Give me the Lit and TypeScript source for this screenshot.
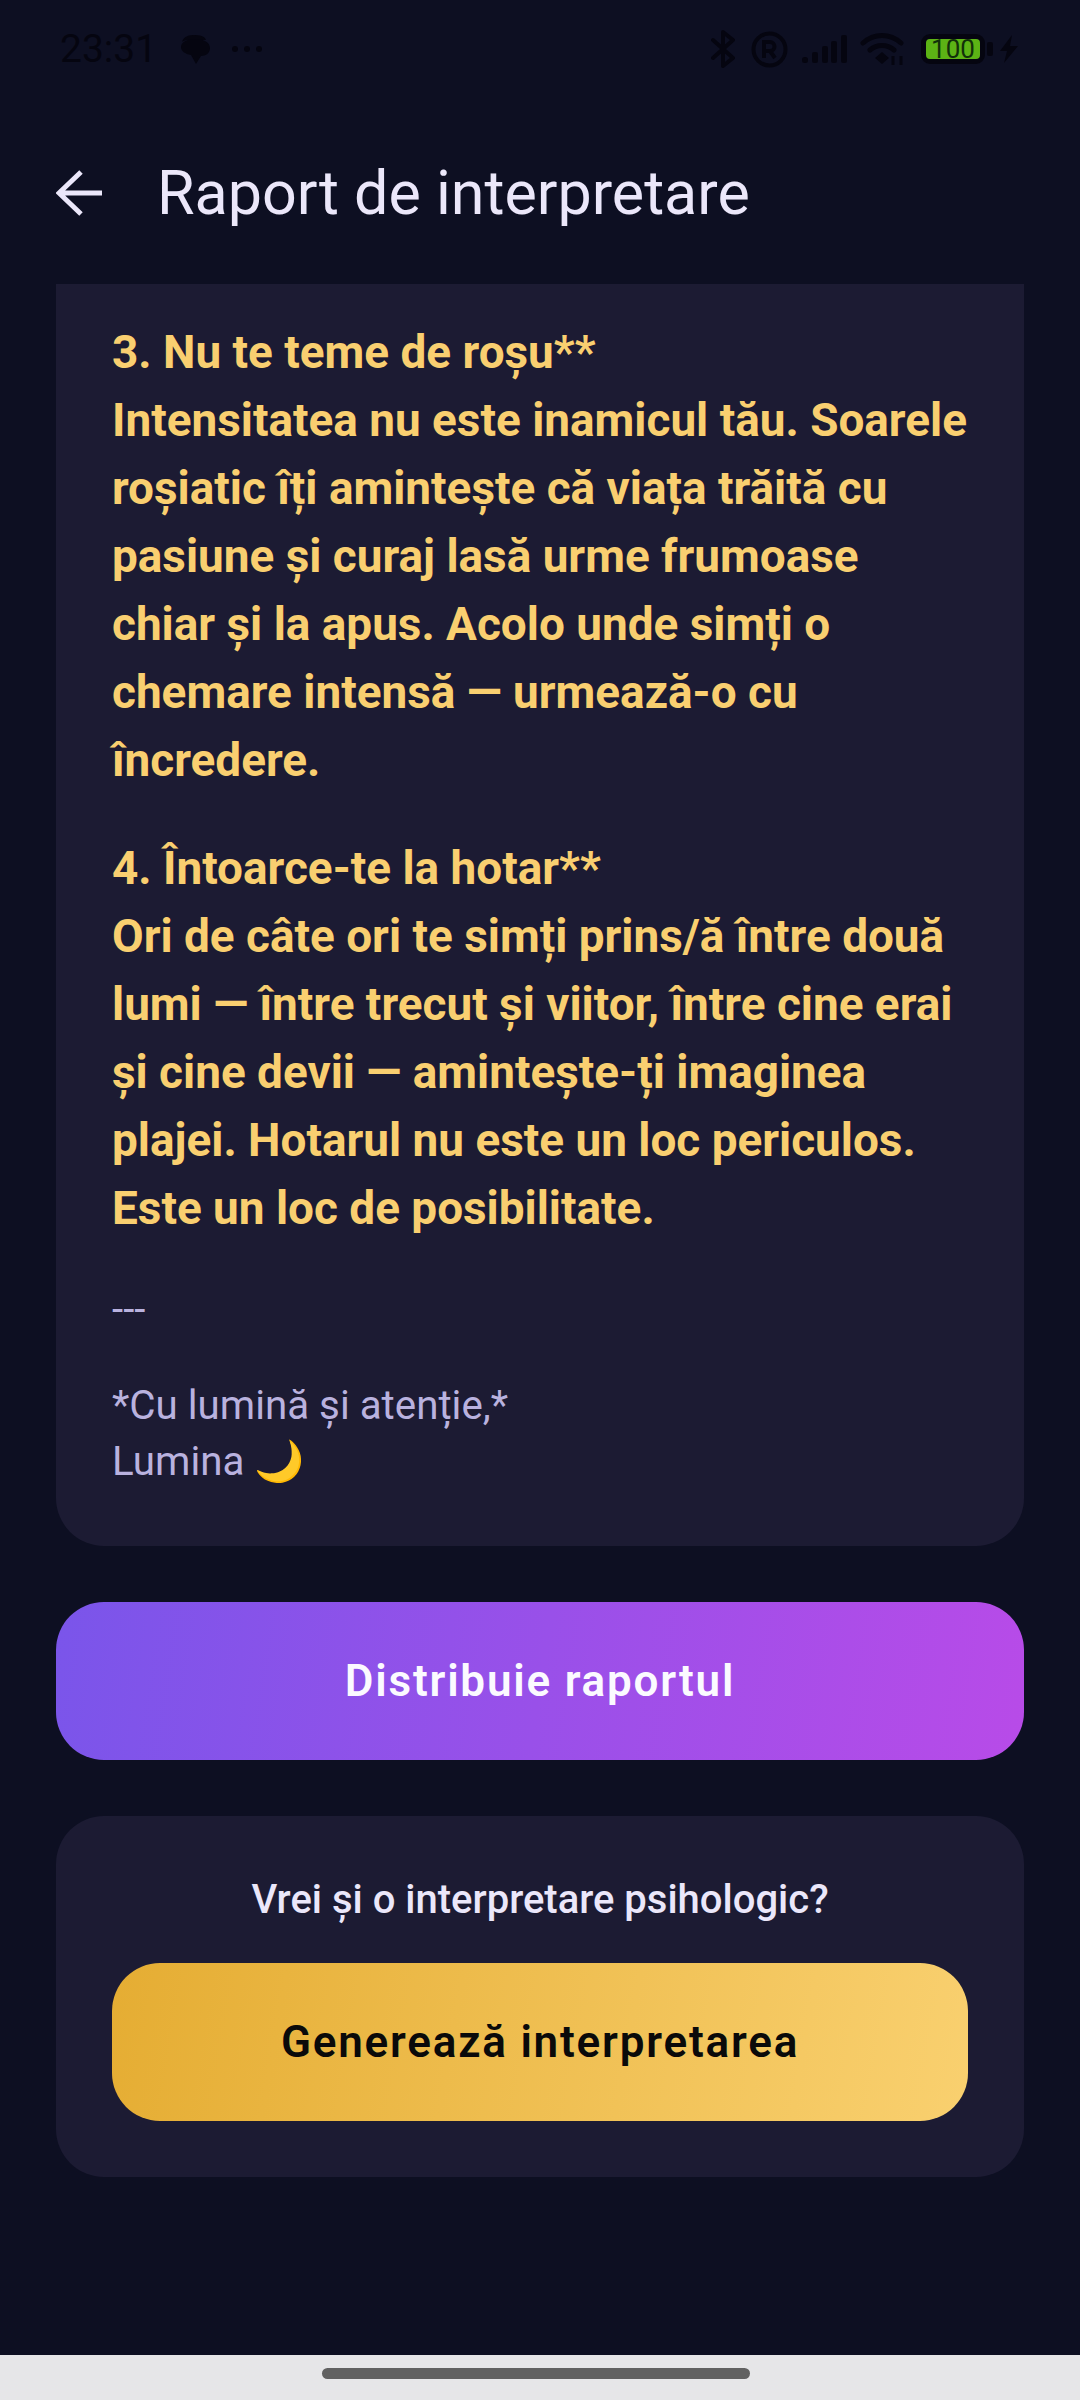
import { LitElement, html, css } from "lit";
import { customElement } from "lit/decorators.js";

@customElement("app-root")
export class AppRoot extends LitElement {
  static styles = css`
    :host {
      display: block;
      width: 1080px;
      height: 2400px;
      background: #0d0f22;
      font-family: Roboto, sans-serif;
      overflow: hidden;
    }
    .page {
      height: 2400px;
      display: flex;
      flex-direction: column;
    }
    .status {
      height: 94px;
      padding: 4px 62px 0 60px;
      display: flex;
      align-items: center;
      justify-content: space-between;
      color: #050510;
      box-sizing: border-box;
    }
    .status-left,
    .status-right {
      display: flex;
      align-items: center;
    }
    .time {
      font-size: 39px;
      width: 121px;
    }
    .status svg {
      display: block;
      flex: none;
    }
    .dots {
      margin-left: 21px;
    }
    .reg {
      margin-left: 16px;
    }
    .signal {
      margin-left: 14px;
    }
    .wifi {
      margin-left: 13px;
    }
    .nub {
      margin-left: 2px;
    }
    .bolt {
      margin-left: 7px;
    }
    .battery {
      width: 64px;
      height: 30px;
      box-sizing: border-box;
      border: 5px solid #050510;
      border-radius: 9px;
      background: #5cb315;
      color: #12300a;
      font-size: 26px;
      line-height: 20px;
      text-align: center;
      margin-left: 15px;
      overflow: hidden;
    }
    .toolbar {
      height: 190px;
      box-sizing: border-box;
      padding: 8px 56px 0;
      display: flex;
      align-items: center;
      gap: 55px;
      color: #ebe7fa;
      font-size: 61px;
    }
    .toolbar svg {
      display: block;
      flex: none;
    }
    .content {
      flex: 1;
      padding: 0 56px;
      display: flex;
      flex-direction: column;
      gap: 56px;
    }
    .card {
      background: #1c1b33;
      border-radius: 48px;
      padding: 0 56px;
    }
    .report {
      border-radius: 0 0 48px 48px;
      height: 1262px;
      box-sizing: border-box;
      padding: 34px 54px 0 56px;
    }
    .gold-text {
      color: #f9cf70;
      font-size: 45.9px;
      font-weight: 700;
      line-height: 68px;
      margin: 0 0 40px;
    }
    .muted {
      color: #b9b2df;
      font-size: 40.3px;
      line-height: 56px;
      margin: 0 0 40px;
    }
    .btn {
      height: 158px;
      border-radius: 48px;
      display: flex;
      align-items: center;
      justify-content: center;
      font-size: 44px;
      font-weight: 600;
      letter-spacing: 1.8px;
    }
    .share {
      background: linear-gradient(99deg, #7a55ea, #b84be8);
      color: #fbfaff;
    }
    .cta {
      height: 361px;
      box-sizing: border-box;
      padding-top: 56px;
    }
    .cta-title {
      color: #ebe7fa;
      font-size: 40px;
      font-weight: 500;
      line-height: 56px;
      text-align: center;
      margin-bottom: 35px;
    }
    .gold {
      background: linear-gradient(100deg, #e5ad33, #f9d06f);
      color: #0a0a0a;
    }
    .nav {
      height: 45px;
      background: #e6e6e8;
      display: flex;
      justify-content: center;
      padding: 13px 8px 0 0;
      box-sizing: border-box;
    }
    .pill {
      width: 428px;
      height: 11px;
      border-radius: 6px;
      background: #616161;
    }
  `;

  render() {
    return html`
      <div class="page">
        <div class="status">
          <div class="status-left">
            <span class="time">23:31</span>
            <svg width="29" height="29" viewBox="0 0 29 29" fill="#050510">
              <path d="M12 0c7 0 12 1 13 5H7C4 5 2 6 1 7c1-4 5-7 11-7z" />
              <path
                d="M14 4c8 0 15 3 15 9 0 5-4 8-9 8l-5 8-5-9C4 19 0 16 0 12c0-5 6-8 14-8z"
              />
            </svg>
            <svg class="dots" width="32" height="8" viewBox="0 0 32 8" fill="#050510">
              <circle cx="4" cy="4" r="3" />
              <circle cx="16" cy="4" r="3" />
              <circle cx="28" cy="4" r="3" />
            </svg>
          </div>
          <div class="status-right">
            <svg width="24" height="38" viewBox="0 0 24 38" fill="none" stroke="#050510" stroke-width="4" stroke-linejoin="round" stroke-linecap="round">
              <path d="M2 10l20 18-10 8V2l10 8L2 28" />
            </svg>
            <svg class="reg" width="37" height="37" viewBox="0 0 37 37" fill="none" stroke="#050510" stroke-width="4">
              <circle cx="18.5" cy="18.5" r="16" />
              <path d="M13 27V11h6a4.500 4.500 0 010 9h-6M19 20l5 7" />
            </svg>
            <svg class="signal" width="45" height="28" viewBox="0 0 45 28" fill="#050510">
              <rect x="0" y="22" width="6" height="6" rx="2.500" />
              <rect x="10" y="17" width="6" height="11" rx="2" />
              <rect x="20" y="11" width="6" height="17" rx="2" />
              <rect x="29" y="6" width="6" height="22" rx="2" />
              <rect x="39" y="0" width="6" height="28" rx="2" />
            </svg>
            <svg class="wifi" width="46" height="34" viewBox="0 0 46 34" fill="none" stroke="#050510" stroke-width="5" stroke-linecap="round">
              <path d="M3 11c11-10 27-10 38 0M10 18c7-6 17-6 24 0" />
              <path d="M15 26l7-6 7 6-7 6z" fill="#050510" stroke="none" />
              <path d="M33 24v9M41 24v9" stroke-width="3" stroke-linecap="butt" />
            </svg>
            <div class="battery">100</div>
            <svg class="nub" width="6" height="14" viewBox="0 0 6 14" fill="#050510">
              <rect width="6" height="14" rx="2" />
            </svg>
            <svg class="bolt" width="18" height="28" viewBox="0 0 18 28" fill="#050510">
              <path d="M12 0L0 16h7L4 28 18 11h-8z" />
            </svg>
          </div>
        </div>

        <div class="toolbar">
          <svg width="46" height="46" viewBox="0 0 46 46" fill="none" stroke="#ebe7fa" stroke-width="5">
            <path d="M46 23H3M25 2L3 23l22 21" />
          </svg>
          <span>Raport de interpretare</span>
        </div>

        <div class="content">
          <div class="card report">
            <p class="gold-text">
              3. Nu te teme de roșu**<br />
              Intensitatea nu este inamicul tău. Soarele roșiatic îți amintește că viața trăită cu
              pasiune și curaj lasă urme frumoase chiar și la apus. Acolo unde simți o chemare
              intensă — urmează-o cu încredere.
            </p>
            <p class="gold-text">
              4. Întoarce-te la hotar**<br />
              Ori de câte ori te simți prins/ă între două lumi — între trecut și viitor, între cine
              erai și cine devii — amintește-ți imaginea plajei. Hotarul nu este un loc periculos.
              Este un loc de posibilitate.
            </p>
            <p class="muted">---</p>
            <p class="muted">*Cu lumină și atenție,*<br />Lumina 🌙</p>
          </div>
          <div class="btn share">Distribuie raportul</div>
          <div class="card cta">
            <div class="cta-title">Vrei și o interpretare psihologic?</div>
            <div class="btn gold">Generează interpretarea</div>
          </div>
        </div>

        <div class="nav"><div class="pill"></div></div>
      </div>
    `;
  }
}

declare global {
  interface HTMLElementTagNameMap {
    "app-root": AppRoot;
  }
}
